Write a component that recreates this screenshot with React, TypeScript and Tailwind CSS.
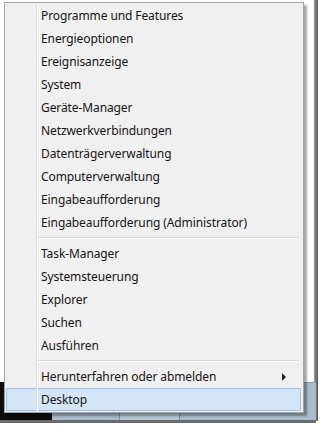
const groups: string[][] = [
  [
    'Programme und Features',
    'Energieoptionen',
    'Ereignisanzeige',
    'System',
    'Geräte-Manager',
    'Netzwerkverbindungen',
    'Datenträgerverwaltung',
    'Computerverwaltung',
    'Eingabeaufforderung',
    'Eingabeaufforderung (Administrator)',
  ],
  ['Task-Manager', 'Systemsteuerung', 'Explorer', 'Suchen', 'Ausführen'],
];

function MenuItem({
  label,
  active = false,
  submenu = false,
}: {
  label: string;
  active?: boolean;
  submenu?: boolean;
}) {
  return (
    <div
      className={
        active
          ? 'flex h-[23px] items-center border border-[#9cc3e8] bg-[#d3e5f7] pl-[34px] pr-3'
          : 'flex h-[23px] items-center border border-transparent pl-[34px] pr-3'
      }
    >
      <span className="flex-1 text-[12px] leading-none tracking-[-0.1px] text-[#151515]">
        {label}
      </span>
      {submenu && (
        <svg width="5" height="8" viewBox="0 0 5 8" className="mr-[1px]">
          <path d="M0 0 L4 4 L0 8 Z" fill="#222" />
        </svg>
      )}
    </div>
  );
}

function Separator() {
  return (
    <div className="flex h-[8px] items-center pl-[32px] pr-[3px]">
      <div className="h-[2px] w-full border-t border-[#d9d9d9] border-b-white border-b" />
    </div>
  );
}

export default function App() {
  return (
    <div
      className="relative h-[426px] w-[322px] overflow-hidden bg-white"
      style={{ fontFamily: '"Noto Sans", "Open Sans", sans-serif' }}
    >
      {/* window frame shadow at the right */}
      <div className="absolute left-[314px] top-0 h-[421px] w-[4px] bg-gradient-to-r from-[#9a9a9a] to-[#5a5a5a]" />

      {/* desktop taskbar behind the menu */}
      <div className="absolute left-0 top-[382px] flex h-[38px] w-[316px]">
        <div className="w-[52px] bg-[#0d0d0d]" />
        <div className="flex flex-1 border-t border-[#8fa3b5] bg-[#a9bccd]">
          <div className="w-[68px] border-r border-[#7f93a6]" />
          <div className="w-[60px] border-r border-[#7f93a6] bg-[#b6c6d5]" />
          <div className="flex-1" />
        </div>
      </div>
      <div className="absolute left-0 top-[420px] h-[3px] w-[316px] bg-[#6b6b6b]" />

      {/* context menu */}
      <div className="absolute left-[4px] top-[2px] z-10 flex w-[300px] flex-col border border-[#a3a3a3] bg-[#f0f0f0] py-[1px] pl-[1px] pr-[2px] shadow-[3px_3px_2px_rgba(0,0,0,0.35)]">
        <div className="pointer-events-none absolute bottom-0 left-[31px] top-0 w-[2px] border-l border-[#dedede] border-r border-r-white" />
        {groups.map((items, gi) => (
          <div key={gi} className="flex flex-col">
            {items.map((label) => (
              <MenuItem key={label} label={label} />
            ))}
            <Separator />
          </div>
        ))}
        <MenuItem label="Herunterfahren oder abmelden" submenu />
        <MenuItem label="Desktop" active />
      </div>
    </div>
  );
}
